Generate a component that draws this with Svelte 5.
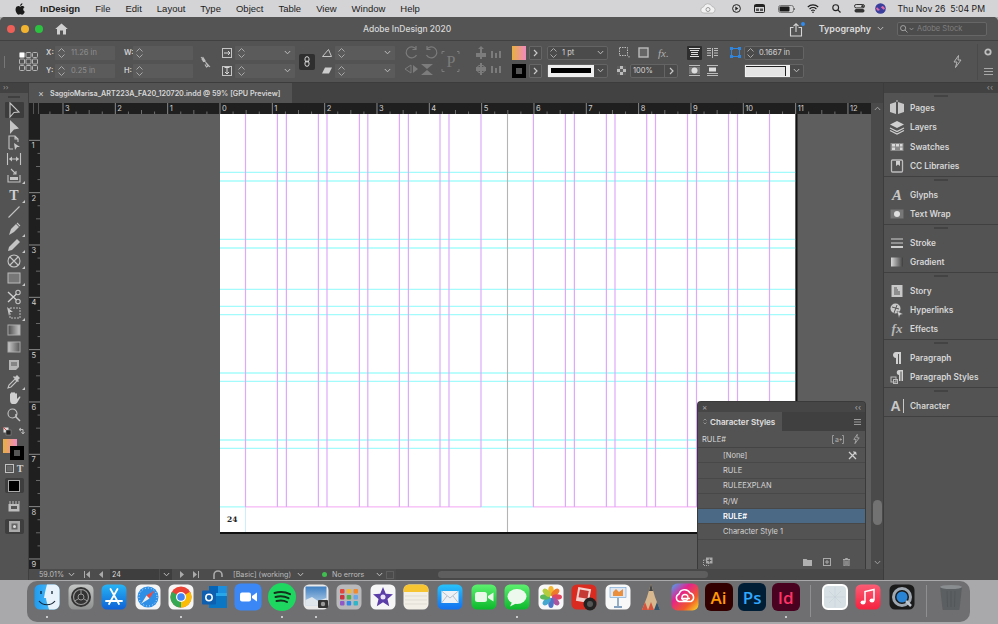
<script>
  const menus = ['File','Edit','Layout','Type','Object','Table','View','Window','Help'];
  const s = 'fill="none" stroke="#c4c4c4" stroke-width="1.1"';
  const f = 'fill="#c4c4c4"';
  const tools = [
    {cy:110,sel:1,i:`<path d="M-4-7 5 2 0 2.5-4 7Z" ${s}/>`},
    {cy:127,i:`<path d="M-4-7 5 1.5 0 2.5-4 7Z" ${f}/>`},
    {cy:143,i:`<path d="M-5 6V-7H1L4-4V-1M1-7V-4H4M-5 6H-1" ${s}/><path d="M0 0 6 4H3L1 7Z" ${f}/>`},
    {cy:159,i:`<path d="M-6.500-6V6M6.500-6V6M-4.500 0H4.500" ${s}/><path d="M-5 0-2-2.500V2.500ZM5 0 2-2.500V2.500Z" ${f}/>`},
    {cy:176,tri:1,i:`<path d="M-6-1V6H6V-1" ${s}/><path d="M-4 1H4V4H-4Z" ${f}/><path d="M-3-7 2-2M-1-2H2V-5" ${s}/>`},
    {cy:195,tri:1,i:`<text x="0" y="5" text-anchor="middle" font-family="Liberation Serif" font-weight="700" font-size="14" fill="#cfcfcf">T</text>`},
    {cy:212,i:`<path d="M-5.500 5.500 5.500-5.500" ${s}/>`},
    {cy:229,tri:1,i:`<path d="M-5 6-3 0 2-5 5-2 0 3Z" ${f}/><path d="M3-6 6-3" ${s}/>`},
    {cy:245,tri:1,i:`<path d="M-6 6-5 2 3-6 6-3-2 5Z" ${f}/>`},
    {cy:261,tri:1,i:`<circle r="6" ${s}/><path d="M-4-4 4 4M4-4-4 4" ${s}/>`},
    {cy:278,tri:1,i:`<rect x="-6" y="-5" width="12" height="10" fill="#777" stroke="#bbb"/>`},
    {cy:297,i:`<circle cx="4" cy="-4.500" r="2.200" ${s}/><circle cx="4" cy="4.500" r="2.200" ${s}/><path d="M-6-5 2.500 3M-6 5 2.500-3" stroke="#d0d0d0" stroke-width="1.300"/>`},
    {cy:313,tri:1,i:`<rect x="-4" y="-5" width="10" height="10" fill="none" stroke="#bbb" stroke-dasharray="2 1"/><path d="M-7-6-1-1-4-1-5 3Z" ${f}/>`},
    {cy:330,i:`<rect x="-6" y="-5" width="12" height="10" fill="url(#g1)" stroke="#aaa"/>`},
    {cy:347,i:`<rect x="-6" y="-5" width="12" height="10" fill="url(#g2)" stroke="#aaa"/>`},
    {cy:365,i:`<path d="M-5-5H5V2L2 5H-5Z" fill="#b5b5b5"/><path d="M-3-2H3M-3 0H3" stroke="#555"/>`},
    {cy:382,tri:1,i:`<path d="M-6 6-5 3 1-3 3-1-3 5Z" ${s}/><path d="M1-5 3-7 6-4 4-2 5-1 4 0-1-5 0-6Z" ${f}/>`},
    {cy:398,i:`<path d="M-4 1V-4C-4-5-3-5-3-4V-1-5C-3-6-1-6-1-5V-1-5C-1-6 1-6 1-5V-1-4C1-5 3-5 3-4V1L5-1C6-2 7-1 6 0L3 5C2 6 1 6-1 6-3 6-4 5-4 1Z" fill="#cfcfcf"/>`},
    {cy:415,i:`<circle cx="-1.500" cy="-1.500" r="4.500" ${s}/><path d="M2-1 2 2 6 6" stroke="#c4c4c4" stroke-width="1.500" fill="none"/>`}
  ].map((t, i, a) => ({...t, gap: a[i + 1] ? a[i + 1].cy - t.cy - 16 : 0}));
  const ruleX = [];
  for (let n = -4; n <= 12; n++) ruleX.push(n);
  const ruleY = [1,2,3,4,5,6,7,8,9];
  const Z = 220, U = 52.33, Y0 = 88;
  const hTicks = [];
  for (let n = -4; n <= 12; n++) for (const k of [1,2,3]) {
    const x = Z + (n + k / 4) * U;
    if (x > 40 && x < 871) hTicks.push({x, mid: k === 2});
  }
  const pages = [245.5,277.4,286.4,318.4,327,359.4,367.8,399.4,408.4,440,449,481,533.4,565.4,574.4,606.4,615,646.7,655.5,687.5,696.5,728.5,737.5,769.5];
  const cyan = [172.4,181,239.4,248,289.4,306.4,314.7,373,381.4,440,448.4];
  const dockPanels = [
    {first:1,items:[
      ['Pages',`<path d="M-7-4 -1-6V6L-7 4ZM7-4 1-6V6L7 4Z" fill="#c8c8c8"/><path d="M0-8V-6" stroke="#c8c8c8"/>`],
      ['Layers',`<path d="M0-6 7-2.500 0 1-7-2.500Z" fill="#d0d0d0"/><path d="M-7 1 0 4.500 7 1M-7 3.500 0 7 7 3.500" fill="none" stroke="#d0d0d0" stroke-width="1.200"/>`],
      ['Swatches',`<rect x="-6.500" y="-4" width="13" height="8" fill="#8a8a8a"/><path d="M-5-3H-2V-.5H-5ZM-1-3H2V-.5H-1ZM3-3H5.500V-.5H3ZM-5 .5H-2V3H-5ZM3 .5H5.500V3H3Z" fill="#d8d8d8"/>`],
      ['CC Libraries',`<rect x="-5.500" y="-6" width="11" height="12" rx="1" fill="none" stroke="#bdbdbd" stroke-width="1.300"/><path d="M-1-5H3V0L1-1.500-1 0Z" fill="#d0d0d0"/>`]]},
    {items:[
      ['Glyphs',`<text x="0" y="5" text-anchor="middle" font-family="Liberation Serif" font-style="italic" font-size="15" fill="#c8c8c8">A</text>`],
      ['Text Wrap',`<rect x="-6.500" y="-4.500" width="13" height="9" fill="#777"/><circle r="3" fill="#e0e0e0"/>`]]},
    {items:[
      ['Stroke',`<path d="M-6-4H6M-6 0H6" stroke="#cfcfcf" stroke-width="1.200"/><path d="M-6 4H6" stroke="#cfcfcf" stroke-width="2"/>`],
      ['Gradient',`<rect x="-6" y="-4.500" width="12" height="9" fill="url(#g3)"/>`]]},
    {items:[
      ['Story',`<rect x="-5.500" y="-6" width="11" height="12" fill="#c8c8c8"/><path d="M-3-3H0M-3-1H1M-3 1H3M-3 3H3" stroke="#555"/>`],
      ['Hyperlinks',`<circle cx="-1.500" cy="-1.500" r="5" fill="#c8c8c8"/><path d="M-5-3 2-1M-3 3 0-5" stroke="#555"/><path d="M0 1 6 4 3 5 2 8Z" fill="#d8d8d8" stroke="#555" stroke-width=".5"/>`],
      ['Effects',`<text x="0" y="4" text-anchor="middle" font-family="Liberation Serif" font-style="italic" font-size="13" fill="#b8b8b8">fx</text>`]]},
    {items:[
      ['Paragraph',`<path d="M-3-6H4V6H2V-4H1V6H-1V0C-5 0-5-6-1-6Z" fill="#d0d0d0"/>`],
      ['Paragraph Styles',`<path d="M0-7H6V4H4.500V-5.500H3.500V4H2V-2C-1-2-1-7 2-7Z" fill="#d0d0d0"/><rect x="-6" y="0" width="5" height="5" fill="none" stroke="#bbb"/><rect x="-3.500" y="2.500" width="4" height="4" fill="none" stroke="#bbb"/>`]]},
    {items:[
      ['Character',`<text x="-1.500" y="5" text-anchor="middle" font-family="Liberation Sans" font-size="14" fill="#c8c8c8">A</text><path d="M6.500-7V7" stroke="#c8c8c8"/>`]]}
  ];
  const styles = ['[None]','RULE','RULEEXPLAN','R/W','RULE#','Character Style 1'];
  const ic = (bg, inner, r = 5.5) => `<rect x="1.500" y="1.500" width="25" height="25" rx="${r}" fill="${bg}"/>${inner}`;
  const apps = [
    {run:1,h:ic('url(#d1)',`<path d="M14 1.500H20.500A5.500 5.500 0 0 1 26.500 7V21A5.500 5.500 0 0 1 20.500 26.500H16C14 20 13 17 13 15H11C12 9 13 5 14 1.500Z" fill="#e8f2fb"/><path d="M8 8V11M19 8V11" stroke="#123" stroke-width="1.300"/><path d="M6 18C10 23 18 23 22 18" fill="none" stroke="#123" stroke-width="1.200"/>`)},
    {h:ic('url(#d2)',`<circle cx="14" cy="14" r="10" fill="#333"/><circle cx="14" cy="14" r="7.500" fill="none" stroke="#999" stroke-width="1.200"/><path d="M14 6.500V11M7.500 18 11 16M20.500 18 17 16M11 14A3 3 0 0 1 17 14 3 3 0 0 1 11 14" fill="none" stroke="#999"/>`)},
    {h:ic('url(#d3)',`<path d="M10.500 6 19 21M17.500 6 9 21M6 18H22" stroke="#fff" stroke-width="1.800" stroke-linecap="round"/>`)},
    {h:ic('#f4f4f4',`<circle cx="14" cy="14" r="10.500" fill="#2f8fe6"/><circle cx="14" cy="14" r="9" fill="none" stroke="#cfe6fa" stroke-dasharray="1 2"/><path d="M20.500 7.500 15.500 15.500 12.500 12.500Z" fill="#ee4b3f"/><path d="M7.500 20.500 12.500 12.500 15.500 15.500Z" fill="#eee"/>`)},
    {run:1,h:ic('#f5f5f5',`<circle cx="14" cy="14" r="10.500" fill="#ea4335"/><path d="M14 14 23.100 8.700A10.500 10.500 0 0 1 14 24.500Z" fill="#fbbc05"/><path d="M14 14 14 24.500A10.500 10.500 0 0 1 4.900 8.700Z" fill="#34a853"/><circle cx="14" cy="14" r="5" fill="#fff"/><circle cx="14" cy="14" r="3.800" fill="#4285f4"/>`)},
    {h:`<path d="M8 3H26V24H8Z" fill="#28a8ea"/><path d="M8 3H17V10H8Z" fill="#0364b8"/><path d="M17 3H26V10H17Z" fill="#1a8fe0"/><path d="M8 13 26 13V25H8Z" fill="#0a76c4"/><rect x="1" y="7.500" width="14" height="14" rx="1" fill="#0f5fb0"/><circle cx="8" cy="14.500" r="3.200" fill="none" stroke="#fff" stroke-width="1.500"/>`},
    {h:`<rect x="0.500" y="0.500" width="27" height="27" rx="6" fill="#3b87f5"/><rect x="6" y="9.500" width="11" height="9" rx="2" fill="#fff"/><path d="M18 13 23 9.500V18.500L18 15Z" fill="#fff"/>`},
    {run:1,h:`<circle cx="14" cy="14" r="14" fill="#1ed760"/><path d="M6.500 10C11 8.500 17.500 8.800 22 11.200M7.500 14C11.500 13 16.500 13.200 20.500 15.200M8.500 18C12 17.200 16 17.300 19 19" fill="none" stroke="#12301c" stroke-width="2" stroke-linecap="round"/>`},
    {run:1,h:ic('#eaeaea',`<rect x="3.500" y="3.500" width="21" height="19" fill="url(#d4)"/><path d="M3.500 17 10 14 16 18 24.500 15V22.500H3.500Z" fill="#dfe6ec"/><rect x="16" y="17" width="10" height="8" rx="1" fill="#333"/><circle cx="21" cy="21" r="2.200" fill="#999"/>`)},
    {h:ic('#b9b9bb',`<g><rect x="5" y="6" width="4.500" height="4.500" rx="1" fill="#e2453c"/><rect x="11.700" y="6" width="4.500" height="4.500" rx="1" fill="#f3b730"/><rect x="18.500" y="6" width="4.500" height="4.500" rx="1" fill="#f08a2d"/><rect x="5" y="12" width="4.500" height="4.500" rx="1" fill="#c9343e"/><rect x="11.700" y="12" width="4.500" height="4.500" rx="1" fill="#4cb050"/><rect x="18.500" y="12" width="4.500" height="4.500" rx="1" fill="#6aa7e6"/><rect x="5" y="18" width="4.500" height="4.500" rx="1" fill="#8f58c7"/><rect x="11.700" y="18" width="4.500" height="4.500" rx="1" fill="#2f87e8"/><rect x="18.500" y="18" width="4.500" height="4.500" rx="1" fill="#30b5c8"/></g>`)},
    {h:ic('#f6f6f6',`<path d="M14 4 16.800 10.800 24 11.300 18.500 16 20.200 23.200 14 19.300 7.800 23.200 9.500 16 4 11.300 11.200 10.800Z" fill="#5b3ea8"/><circle cx="14" cy="14" r="2.500" fill="#e9e2f7"/>`)},
    {h:ic('#f1efe6',`<path d="M1.500 9V7A5.500 5.500 0 0 1 7 1.500H21A5.500 5.500 0 0 1 26.500 7V9Z" fill="#f7c531"/><path d="M3 13H25M3 17H25M3 21H25" stroke="#d8d6cc" stroke-width=".7"/>`)},
    {h:ic('url(#d5)',`<rect x="5.500" y="8" width="17" height="12" fill="#eef2f6"/><path d="M5.500 8 14 15 22.500 8M5.500 20 11 13M22.500 20 17 13" fill="none" stroke="#a8b2bd" stroke-width=".8"/>`)},
    {h:ic('url(#d6)',`<rect x="5" y="9" width="12" height="10" rx="2.500" fill="#e8f7e8"/><path d="M18 13 23.500 9.500V18.500L18 15Z" fill="#e8f7e8"/>`)},
    {run:1,h:ic('url(#d6)',`<ellipse cx="14" cy="13.500" rx="9.500" ry="7.500" fill="#eef9ee"/><path d="M9 19 7 23.500 13 20.500Z" fill="#eef9ee"/>`)},
    {h:ic('#f7f7f7',`<g transform="translate(14 14)"><ellipse cy="-6" rx="2.800" ry="5" fill="#f5b52c"/><ellipse cy="-6" rx="2.800" ry="5" fill="#ef7a2a" transform="rotate(45)"/><ellipse cy="-6" rx="2.800" ry="5" fill="#e2455f" transform="rotate(90)"/><ellipse cy="-6" rx="2.800" ry="5" fill="#a9559f" transform="rotate(135)"/><ellipse cy="-6" rx="2.800" ry="5" fill="#4e74c7" transform="rotate(180)"/><ellipse cy="-6" rx="2.800" ry="5" fill="#45a8cf" transform="rotate(225)"/><ellipse cy="-6" rx="2.800" ry="5" fill="#5cb85a" transform="rotate(270)"/><ellipse cy="-6" rx="2.800" ry="5" fill="#b4cc3d" transform="rotate(315)"/></g>`)},
    {h:ic('#d92b20',`<rect x="7" y="5" width="13" height="14" fill="#f6d2cf" transform="rotate(10 13 12)"/><rect x="9" y="7" width="9" height="8" fill="#c63a35" transform="rotate(10 13 12)"/><circle cx="20" cy="21" r="6.500" fill="#222"/><circle cx="20" cy="21" r="3" fill="#555"/>`)},
    {h:ic('#f8f8f8',`<rect x="6" y="4.500" width="16" height="10" fill="#dfe8f2" stroke="#6b9fd3" stroke-width=".6"/><path d="M9 9 12 6 15 9 19 6V13H9Z" fill="#e98f3e"/><path d="M14 15V23M10 24H18" stroke="#5f86ad" stroke-width="1.300"/>`)},
    {h:`<path d="M14 .5 18 14 23 27H5L10 14Z" fill="#d7b88f"/><path d="M14 .5 16 8H12Z" fill="#444"/><path d="M5 27 8 19 11 27ZM11 27 14 19 17 27Z" fill="#d5533d"/><path d="M17 27 20 19 23 27Z" fill="#33536c"/>`},
    {h:`<rect x="0.500" y="0.500" width="27" height="27" rx="6" fill="url(#d7)"/><path d="M8 18.500A4 4 0 0 1 8 11 6 6 0 0 1 19 10 4.500 4.500 0 0 1 20 18.500ZM10 15.500H19" fill="none" stroke="#fff" stroke-width="1.500"/><circle cx="14" cy="14.500" r="3" fill="none" stroke="#fff" stroke-width="1.300"/>`},
    {a:'Ai',bg:'#330000',fg:'#ff9a00'},
    {a:'Ps',bg:'#001e36',fg:'#31a8ff'},
    {a:'Id',bg:'#49021f',fg:'#ff3366',run:1,gapAfter:1},
    {h:`<rect x="2" y="2" width="24" height="24" rx="5" fill="#d7e0e4" stroke="#fff" stroke-width="2"/><path d="M8 8 20 20M20 8 8 20M14 4V24M4 14H24" stroke="#c6d2d8" stroke-width=".6"/>`},
    {h:ic('url(#d8)',`<path d="M11 19V8.500L20 6.500V17" fill="none" stroke="#fff" stroke-width="1.500"/><ellipse cx="9" cy="19.500" rx="2.500" ry="2" fill="#fff"/><ellipse cx="18" cy="17.500" rx="2.500" ry="2" fill="#fff"/>`)},
    {h:ic('#1a1a1a',`<circle cx="14" cy="14" r="8.500" fill="none" stroke="#9fa7b0" stroke-width="3"/><circle cx="14" cy="14" r="5.500" fill="#2a84d6"/><path d="M18 18 23 23" stroke="#bfc5cc" stroke-width="2.500"/>`),gapAfter:1},
    {h:`<path d="M3 4H25L22.500 26.500A1.500 1.500 0 0 1 21 27H7A1.500 1.500 0 0 1 5.500 26.500Z" fill="#5c5f61"/><ellipse cx="14" cy="4" rx="11" ry="2" fill="#8a8d8f"/><path d="M10 8 10.500 24M14 8V24M18 8 17.500 24" stroke="#4e5153" stroke-width=".6"/>`}
  ];
</script>

{#snippet chev(w = 7)}
  <svg class="chev" width={w} height="5" viewBox="0 0 7 5"><path d="M.8 1 3.500 3.800 6.200 1" fill="none" stroke="#bdbdbd" stroke-width="1"/></svg>
{/snippet}
{#snippet spin()}
  <svg class="spin" width="11" height="12" viewBox="0 0 11 12"><path d="M2.500 4.500 5.500 1.500 8.500 4.500M2.500 7.500 5.500 10.500 8.500 7.500" fill="none" stroke="#a8a8a8"/></svg>
{/snippet}
{#snippet arrowBtn()}
  <span class="arrowbtn"><svg width="5" height="8" viewBox="0 0 5 8"><path d="M1 1 4 4 1 7" fill="none" stroke="#c8c8c8" stroke-width="1.200"/></svg></span>
{/snippet}
{#snippet field(w, text, down)}
  <span class="field" style="width:{w}px">
    {@render spin()}
    <span class="dim">{text}</span>
    {#if down}{@render chev()}{/if}
  </span>
{/snippet}

<svg class="defs" width="0" height="0" aria-hidden="true">
  <defs>
    <linearGradient id="g1"><stop offset="0" stop-color="#4a4a4a"/><stop offset="1" stop-color="#c8c8c8"/></linearGradient>
    <linearGradient id="g2"><stop offset="0" stop-color="#c8c8c8"/><stop offset="1" stop-color="#555"/></linearGradient>
    <linearGradient id="g3"><stop offset="0" stop-color="#d8d8d8"/><stop offset="1" stop-color="#3f3f3f"/></linearGradient>
    <linearGradient id="sw" x2="1" y2="0"><stop offset="0" stop-color="#e8b03f"/><stop offset="1" stop-color="#f089c0"/></linearGradient>
    <linearGradient id="d1" x2="1"><stop offset="0" stop-color="#1f9bf0"/><stop offset="1" stop-color="#5ac8fa"/></linearGradient>
    <linearGradient id="d2" x2="0" y2="1"><stop offset="0" stop-color="#c4c6c6"/><stop offset="1" stop-color="#8f9190"/></linearGradient>
    <linearGradient id="d3" x2="0" y2="1"><stop offset="0" stop-color="#27b4f5"/><stop offset="1" stop-color="#0f62d6"/></linearGradient>
    <linearGradient id="d4" x2="0" y2="1"><stop offset="0" stop-color="#3e7fc2"/><stop offset="1" stop-color="#bcd4ea"/></linearGradient>
    <linearGradient id="d5" x2="0" y2="1"><stop offset="0" stop-color="#28c2fb"/><stop offset="1" stop-color="#1470ee"/></linearGradient>
    <linearGradient id="d6" x2="0" y2="1"><stop offset="0" stop-color="#5cf16f"/><stop offset="1" stop-color="#0cb82c"/></linearGradient>
    <linearGradient id="d7" x1="0" y1="0" x2="1" y2="1"><stop offset="0" stop-color="#3fa9f5"/><stop offset=".35" stop-color="#e3238e"/><stop offset=".7" stop-color="#f1592a"/><stop offset="1" stop-color="#f9e125"/></linearGradient>
    <linearGradient id="d8" x2="0" y2="1"><stop offset="0" stop-color="#fb5c74"/><stop offset="1" stop-color="#f5223f"/></linearGradient>
  </defs>
</svg>

<div class="screen">
  <header class="menubar">
    <svg class="apple" width="10" height="12" viewBox="0 0 17 20"><path fill="#1a1a1a" d="M14 10.600c0-2.400 2-3.500 2.100-3.600-1.100-1.700-2.900-1.900-3.500-1.900-1.500-.2-2.900.9-3.700.9s-1.900-.9-3.200-.9C4 5.200 2.500 6.100 1.700 7.500 0 10.500 1.300 14.900 3 17.300c.8 1.200 1.800 2.500 3 2.500 1.200-.1 1.700-.8 3.100-.8s1.900.8 3.200.8 2.200-1.200 3-2.400c.9-1.400 1.300-2.700 1.300-2.800-.1 0-2.600-1-2.600-4zM11.600 3.400c.7-.8 1.100-1.900 1-3.100-1 0-2.200.7-2.900 1.500-.6.700-1.200 1.900-1 3 1.100.1 2.200-.6 2.900-1.400z"/></svg>
    <b class="app">InDesign</b>
    {#each menus as m}<span>{m}</span>{/each}
    <span class="mb-right">
      <svg width="16" height="11" viewBox="0 0 16 11"><path d="M4 10A3 3 0 0 1 3.500 4 4.500 4.500 0 0 1 12 3.500 3.300 3.300 0 0 1 12.500 10Z" fill="#f2f2f2" stroke="#aaa" stroke-width=".7"/><circle cx="8" cy="6.500" r="2" fill="none" stroke="#999"/></svg>
      <svg class="m1" width="9" height="9" viewBox="0 0 9 9"><circle cx="4.500" cy="4.500" r="3.900" fill="none" stroke="#222"/><path d="M3.300 2.600 6.300 4.500 3.300 6.400Z" fill="#222"/></svg>
      <svg class="m2" width="11" height="9" viewBox="0 0 11 9"><rect x=".5" y=".5" width="10" height="8" rx="1" fill="none" stroke="#222"/><path d="M.5 1H10.500V3H.5Z" fill="#222"/><path d="M2 4.500H5V7H2ZM6 4.500H9V7H6Z" fill="#555"/></svg>
      <svg class="m3" width="18" height="8" viewBox="0 0 18 8"><rect x=".5" y=".5" width="15" height="7" rx="2" fill="none" stroke="#777"/><rect x="1.500" y="1.500" width="10" height="5" rx="1" fill="#1c1c1c"/><path d="M16.500 3V5" stroke="#777"/></svg>
      <svg class="m4" width="12" height="9" viewBox="0 0 12 9"><path d="M.8 3A7.500 7.500 0 0 1 11.200 3M2.600 5A5 5 0 0 1 9.400 5M4.300 6.800A2.500 2.500 0 0 1 7.700 6.800" fill="none" stroke="#1c1c1c" stroke-width="1.100"/><circle cx="6" cy="8.200" r=".8" fill="#1c1c1c"/></svg>
      <svg class="m5" width="9" height="9" viewBox="0 0 9 9"><circle cx="3.700" cy="3.700" r="2.900" fill="none" stroke="#222" stroke-width="1.100"/><path d="M5.800 5.800 8.500 8.500" stroke="#222" stroke-width="1.200"/></svg>
      <svg class="m6" width="11" height="9" viewBox="0 0 11 9"><rect x=".5" y=".5" width="10" height="3.400" rx="1.700" fill="none" stroke="#333"/><rect x=".5" y="5" width="10" height="3.400" rx="1.700" fill="#333"/><circle cx="8.500" cy="2.200" r="1.200" fill="#333"/></svg>
      <svg class="m7" width="11" height="11" viewBox="0 0 11 11"><circle cx="5.500" cy="5.500" r="5.300" fill="#3a3f9e"/><path d="M1 5.500C3 2 4 9 5.500 5.500S8 2 10 5.500C8 9 7 3 5.500 5.500S3 9 1 5.500Z" fill="#e26aa8"/></svg>
      <span class="clock">Thu Nov 26&nbsp; 5:04 PM</span>
    </span>
  </header>

  <main class="window">
    <div class="titlebar">
      <i class="light r"></i><i class="light y"></i><i class="light g"></i>
      <svg class="home" width="13" height="12" viewBox="0 0 13 12"><path d="M6.500.5 12.800 6H11V11.500H8V7.500H5V11.500H2V6H.2Z" fill="#cfcfcf"/></svg>
      <span class="title">Adobe InDesign 2020</span>
      <svg class="share" width="14" height="14" viewBox="0 0 14 14"><path d="M4.500 4.500H1.500V13H12.500V4.500H9.500M7 9V1M4.500 3.200 7 .8 9.500 3.200" fill="none" stroke="#d5d5d5" stroke-width="1.100"/></svg>
      <i class="bluedot"></i>
      <b class="workspace">Typography</b>
      {@render chev()}
      <span class="stock">
        <svg width="8" height="8" viewBox="0 0 9 9"><circle cx="3.500" cy="3.500" r="2.900" fill="none" stroke="#aaa"/><path d="M5.600 5.600 8.400 8.400" stroke="#aaa"/></svg>
        <svg width="5" height="4" viewBox="0 0 7 5"><path d="M.8 1 3.500 3.800 6.200 1" fill="none" stroke="#aaa"/></svg>
        <span>Adobe Stock</span>
      </span>
    </div>

    <div class="control">
      <i class="grip"></i>
      <svg class="refgrid" width="19" height="19" viewBox="0 0 19 19">
        {#each [0,1,2] as r}{#each [0,1,2] as c}
          <rect x={c*6.5+.5} y={r*6.5+.5} width="5" height="5" rx="1" fill={r===0&&c===0?'#fff':'none'} stroke="#b5b5b5"/>
        {/each}{/each}
      </svg>
      <div class="cg xy">
        <div class="r2"><b>X:</b>{@render field(60,'11.26 in')}</div>
        <div class="r2"><b>Y:</b>{@render field(60,'0.25 in')}</div>
      </div>
      <div class="cg wh">
        <div class="r2"><b>W:</b>{@render field(60,'')}</div>
        <div class="r2"><b>H:</b>{@render field(60,'')}</div>
      </div>
      <svg class="unlink" width="11" height="12" viewBox="0 0 11 12"><path d="M3 1.500 5 4.500 3.500 5.500 2 3ZM6 7 8 10 6.500 11 5 8.500M1 1 10 11" fill="none" stroke="#bbb" stroke-width="1.100"/></svg>
      <div class="cg scale">
        <div class="r2"><svg width="10" height="10" viewBox="0 0 10 10"><rect x=".5" y=".5" width="9" height="9" fill="none" stroke="#c4c4c4"/><path d="M2 5H8M6 3 8 5 6 7" fill="none" stroke="#d8d8d8"/></svg>{@render field(60,'',true)}</div>
        <div class="r2"><svg width="10" height="10" viewBox="0 0 10 10"><rect x=".5" y=".5" width="9" height="9" fill="none" stroke="#c4c4c4"/><path d="M5 2V8M3 6 5 8 7 6M2.500 1.500H7.500" fill="none" stroke="#d8d8d8"/></svg>{@render field(60,'',true)}</div>
      </div>
      <span class="linkbtn"><svg width="6" height="11" viewBox="0 0 6 11"><rect x="1" y=".7" width="4" height="5.300" rx="2" fill="none" stroke="#ddd"/><rect x="1" y="5" width="4" height="5.300" rx="2" fill="none" stroke="#ddd"/></svg></span>
      <div class="cg angle">
        <div class="r2"><svg width="10" height="8" viewBox="0 0 10 8"><path d="M.5 7.500H9.500L6.500 .5Z" fill="none" stroke="#c4c4c4"/></svg>{@render field(60,'',true)}</div>
        <div class="r2"><svg width="10" height="7" viewBox="0 0 10 7"><path d="M0 6.500 3 .5H10L7 6.500Z" fill="#cdcdcd"/></svg>{@render field(60,'',true)}</div>
      </div>
      <svg class="rot" width="58" height="34" viewBox="0 0 58 34">
        <g fill="none" stroke="#7c7c7c" stroke-width="1.200">
          <path d="M12 4A5.500 5.500 0 1 0 12.500 10M12 1V4.500H8.500"/>
          <path d="M23 4A5.500 5.500 0 1 1 22.500 10M23 1V4.500H26.500"/>
        </g>
        <g fill="#7c7c7c">
          <path d="M7 20V28L1 24Z" fill="none" stroke="#7c7c7c"/><path d="M9 20V28L14 24Z"/><path d="M17 19H29L23 24ZM17 30H29L23 25Z"/>
        </g>
        <text x="47" y="22" text-anchor="middle" font-family="Liberation Serif" font-size="16" fill="#7c7c7c">P</text>
        <path d="M38 9V6.500H40.500M55 9V6.500H53M38 24V26.500H40.500M55 24V26.500H53" fill="none" stroke="#7c7c7c"/>
      </svg>
      <svg class="aligns" width="27" height="34" viewBox="0 0 27 34">
        <g fill="#7c7c7c">
          <path d="M6 1 9 4H3ZM1 8H11V12H1ZM5 4H7V14H5Z"/><path d="M1 22H11V26H1ZM5 18H7V30H5Z"/><circle cx="6" cy="24" r="4" fill="none" stroke="#7c7c7c"/>
          <path d="M16 6H18V13H16ZM20 8H22V13H20ZM24 6H26V13H24Z"/>
          <path d="M16 21H18V28H16ZM20 23H22V28H20ZM24 21H26V28H24Z"/>
        </g>
      </svg>
      <div class="cg colors">
        <div class="r2"><svg width="14" height="14"><rect width="14" height="14" fill="url(#sw)"/></svg>{@render arrowBtn()}</div>
        <div class="r2"><svg width="14" height="14"><rect width="14" height="14" fill="#000"/><rect x="4" y="4" width="6" height="6" fill="#555"/></svg>{@render arrowBtn()}</div>
      </div>
      <div class="cg strokes">
        <div class="box w61">{@render spin()}<span class="val">1 pt</span>{@render chev()}</div>
        <div class="box w61 pad0"><span class="white"><i class="blk"></i></span>{@render chev()}</div>
      </div>
      <div class="cg fxs">
        <div class="r2 fxrow">
          <svg width="11" height="11" viewBox="0 0 11 11"><rect x=".5" y=".5" width="8" height="8" fill="none" stroke="#bbb" stroke-dasharray="1.500 1"/><path d="M10 9V10.500" stroke="#bbb"/></svg>
          <svg width="11" height="11" viewBox="0 0 11 11"><rect x="1" y="1" width="9" height="9" fill="#666" stroke="#bbb" stroke-width="1.400"/></svg>
          <span class="fx">fx.</span>
        </div>
        <div class="r2 oprow">
          <svg width="9" height="9" viewBox="0 0 9 9"><rect width="9" height="9" fill="#bbb"/><path d="M0 0H3V3H0ZM6 0H9V3H6ZM3 3H6V6H3ZM0 6H3V9H0ZM6 6H9V9H6Z" fill="#5d5d5d"/></svg>
          <span class="box opv"><span class="val">100%</span><span class="arrowin"><svg width="5" height="8" viewBox="0 0 5 8"><path d="M1 1 4 4 1 7" fill="none" stroke="#c8c8c8" stroke-width="1.200"/></svg></span></span>
        </div>
      </div>
      <div class="cg wraps">
        <div class="r2"><span class="wrapbtn on"><svg width="11" height="10" viewBox="0 0 11 10"><path d="M0 .5H11M1 2.500H10M2 4.500H9M2 6.500H9M1 8.500H10" stroke="#ddd"/></svg></span><span class="wrapbtn"><svg width="11" height="10" viewBox="0 0 11 10"><path d="M0 .5H4M0 2.500H4M0 5H4M0 7.500H4M7 .5H11M7 2.500H11M7 5H11M7 7.500H11M5.500 0V10" stroke="#bbb"/></svg></span></div>
        <div class="r2"><span class="wrapbtn"><svg width="11" height="11" viewBox="0 0 11 11"><rect y="2" width="11" height="7" fill="#777"/><circle cx="5.500" cy="5.500" r="3" fill="#ddd"/><path d="M0 .5H11M0 10.500H11" stroke="#bbb"/></svg></span><span class="wrapbtn"><svg width="11" height="11" viewBox="0 0 11 11"><path d="M0 .5H11M0 10.500H11" stroke="#bbb"/><rect x="2" y="2.500" width="7" height="4" fill="#ddd"/><path d="M0 8.500H11" stroke="#bbb"/></svg></span></div>
      </div>
      <div class="cg corners">
        <div class="r2">
          <svg width="11" height="11" viewBox="0 0 11 11"><rect x="1.500" y="1.500" width="8" height="8" fill="none" stroke="#2f86e0"/><path d="M0 0H3V3H0ZM8 0H11V3H8ZM0 8H3V11H0ZM8 8H11V11H8Z" fill="#2f86e0"/></svg>
          <span class="box w60">{@render spin()}<span class="val">0.1667 in</span></span>
        </div>
        <div class="r2 r-end"><span class="box w60 pad0"><span class="white cstyle"><i></i></span>{@render chev()}</span></div>
      </div>
      <svg class="bolt" width="9" height="13" viewBox="0 0 9 13"><path d="M5.500.5 1 7H4L2.500 12.500 8 5H5Z" fill="none" stroke="#b5b5b5"/></svg>
      <div class="cend">
        <svg width="8" height="8" viewBox="0 0 8 8"><circle cx="4" cy="4" r="2.700" fill="none" stroke="#c0c0c0" stroke-width="1.800"/></svg>
        <svg width="9" height="7" viewBox="0 0 9 7"><path d="M0 .5H9M0 3.500H9M0 6.500H9" stroke="#a8a8a8"/></svg>
      </div>
    </div>

    <div class="body">
      <aside class="tools">
        <div class="tools-top"><span class="dbl">››</span></div>
        <i class="tool-grip"></i>
        <div class="toolstack">
          {#each tools as t}
            <span class="tool" class:sel={t.sel} class:tri={t.tri} style="margin-bottom:{t.gap}px">
              <svg width="16" height="16" viewBox="-8 -8 16 16">{@html t.i}</svg>
            </span>
          {/each}
        </div>
        <div class="defaults">
          <svg width="12" height="9" viewBox="0 0 12 9"><rect x=".5" y=".5" width="5" height="5" fill="#ddd"/><path d="M.5.5 5.500 5.500" stroke="#e33"/><rect x="3" y="3" width="5" height="5" fill="#222" stroke="#999" stroke-width=".5"/></svg>
          <svg width="8" height="8" viewBox="0 0 8 8"><path d="M1 2.500H5V6.500M3 1 1 2.500 3 4M3.500 5 5 7 6.500 5" fill="none" stroke="#bbb"/></svg>
        </div>
        <div class="fillstroke"><i class="fillc"></i><i class="strokec"><i></i></i></div>
        <div class="fmt">
          <span class="fmtb"><i></i></span>
          <span class="fmtt">T</span>
        </div>
        <div class="boxed"><i></i></div>
        <div class="viewtool">
          <svg width="14" height="11" viewBox="0 0 14 11"><rect x="1.500" y="3" width="11" height="7.500" fill="#bdbdbd"/><path d="M3 0V3M6 0V3M9 0V3M12 0V3" stroke="#bdbdbd"/><rect x="4" y="5" width="6" height="3" fill="#555"/></svg>
        </div>
        <div class="boxed scr"><svg width="11" height="11" viewBox="0 0 11 11"><rect width="11" height="11" fill="#aaa"/><rect x="2.500" y="2.500" width="6" height="6" fill="#666"/><circle cx="5.500" cy="5.500" r="1.500" fill="#ddd"/></svg></div>
      </aside>

      <section class="center">
        <div class="tabbar">
          <div class="tab"><span class="x">×</span><b>SaggioMarisa_ART223A_FA20_120720.indd @ 59% [GPU Preview]</b></div>
        </div>
        <div class="rulerrow">
          <span class="rcorner"></span>
          <svg class="hruler" width="831" height="11" viewBox="40 0 831 11">
            {#each hTicks as t}
              <path d={`M${t.x} ${t.mid ? 7 : 8.500}V11`} stroke="#6f6f6f" stroke-width="1"/>
            {/each}
            {#each ruleX as n}
              {#if Z + n * U >= 40}
                <path d={`M${Z + n * U} 0V11`} stroke="#8a8a8a"/>
                <text x={Z + n * U + 2} y="8" class="rn">{Math.abs(n)}</text>
              {/if}
            {/each}
          </svg>
          <span class="upbtn"><svg width="7" height="5" viewBox="0 0 7 5"><path d="M.8 4 3.500 1.200 6.200 4" fill="none" stroke="#a0a0a0"/></svg></span>
        </div>
        <div class="midrow">
          <svg class="vruler" width="11" height="455" viewBox="0 114 11 455">
            {#each ruleY as n}
              <path d={`M0 ${Y0 + n * U}H11`} stroke="#8a8a8a"/>
              <text x="2.500" y={Y0 + n * U + 8} class="rn">{n}</text>
              {#each [1,2,3] as k}
                <path d={`M${k === 2 ? 7 : 8.500} ${Y0 + n * U + k * U / 4}H11`} stroke="#6a6a6a"/>
              {/each}
            {/each}
          </svg>
          <div class="canvas">
            <div class="page">
              <svg width="578" height="421" viewBox="220 114 578 421">
                <rect x="220" y="114" width="575.500" height="418" fill="#fff"/>
                <path d="M245.500 507V532" stroke="#cfeefc"/>
                {#each cyan as y}
                  <path d={`M220 ${y}H795.500`} stroke="#a4fbfb" stroke-width="1.300"/>
                {/each}
                <path d="M220 506.800H245M481 506.800H533M769.500 506.800H795.500" stroke="#a4fbfb" stroke-width="1.300"/>
                <path d="M245 506.800H481M533 506.800H769.500" stroke="#f6b8f6" stroke-width="1.300"/>
                {#each pages as x}
                  <path d={`M${x} 114V507`} stroke="#dca9fb" stroke-width="1.200"/>
                {/each}
                <path d="M507.500 114V532" stroke="#b4b4b4" stroke-width="1.100"/>
                <path d="M796.500 114V534M220 533H797" stroke="#111" stroke-width="2"/>
                <text x="227" y="521.500" class="folio">24</text>
              </svg>
            </div>
            <section class="panel">
              <div class="p-top"><span>×</span><span>‹‹</span></div>
              <div class="p-tabs">
                <div class="p-tab"><svg width="4" height="7" viewBox="0 0 4 7"><path d="M.5 2.500 2 1 3.500 2.500M.5 4.500 2 6 3.500 4.500" fill="none" stroke="#aaa" stroke-width=".7"/></svg><b>Character Styles</b></div>
                <svg class="p-menu" width="7" height="6" viewBox="0 0 7 6"><path d="M0 .5H7M0 3H7M0 5.500H7" stroke="#9a9a9a"/></svg>
              </div>
              <div class="p-cur">
                <span>RULE#</span>
                <span class="p-cur-ic">
                  <svg width="12" height="9" viewBox="0 0 12 9"><path d="M2 .5H.5V8.500H2M10 .5H11.500V8.500H10M7.500 4.500H10M8.700 3.300V5.700" fill="none" stroke="#aaa" stroke-width=".8"/><text x="5" y="7" text-anchor="middle" font-family="Inter" font-size="7" fill="#aaa">a</text></svg>
                  <svg width="7" height="10" viewBox="0 0 9 13"><path d="M5.500.5 1 7H4L2.500 12.500 8 5H5Z" fill="none" stroke="#b5b5b5"/></svg>
                </span>
              </div>
              <ul>
                {#each styles as st, i}
                  <li class:active={i === 4}>
                    {st}
                    {#if i === 0}<svg width="9" height="9" viewBox="0 0 9 9"><path d="M1 8 8 1M1 1 8 8" stroke="#cfcfcf" stroke-width="1.300"/><path d="M5.500.5 8.500 3.500" stroke="#cfcfcf" stroke-width="1.300"/></svg>{/if}
                  </li>
                {/each}
              </ul>
              <div class="p-foot">
                <svg width="10" height="9" viewBox="0 0 10 9"><rect x=".5" y="3" width="5" height="5.500" fill="none" stroke="#aaa" stroke-dasharray="1 1"/><rect x="3" y=".5" width="6.500" height="6" fill="#aaa"/><path d="M6.300 1.500V5.500M4.300 3.500H8.300" stroke="#555"/></svg>
                <span class="grow"></span>
                <svg width="9" height="7" viewBox="0 0 9 7"><path d="M0 0H3.500L4.500 1H9V7H0Z" fill="#b0b0b0"/></svg>
                <svg class="pf2" width="8" height="8" viewBox="0 0 8 8"><rect x=".5" y=".5" width="7" height="7" fill="none" stroke="#aaa"/><path d="M4 2V6M2 4H6" stroke="#aaa"/></svg>
                <svg class="pf3" width="7" height="8" viewBox="0 0 7 8"><path d="M0 1.500H7M2.500 1.500V.5H4.500V1.500M1 2V8H6V2" fill="none" stroke="#aaa"/><path d="M1.500 2.500H5.500V7.500H1.500Z" fill="#888"/></svg>
              </div>
              <div class="p-bottom"><i></i></div>
            </section>
          </div>
          <div class="vscroll">
            <i class="thumb"></i>
            <svg width="7" height="5" viewBox="0 0 7 5"><path d="M.8 1 3.500 3.800 6.200 1" fill="none" stroke="#a0a0a0"/></svg>
          </div>
        </div>
        <footer class="status">
          <span class="zoomv">59.01%</span>{@render chev()}
          <svg class="nav1" width="20" height="7" viewBox="0 0 20 7"><path d="M.5 0V7" stroke="#aaa"/><path d="M6 0V7L2 3.500ZM19 0V7L15 3.500Z" fill="#aaa"/></svg>
          <span class="pageno">24</span>
          <span class="pagebtn">{@render chev()}</span>
          <svg class="nav2" width="20" height="7" viewBox="0 0 20 7"><path d="M1 0V7L5 3.500ZM14 0V7L18 3.500Z" fill="#aaa"/><path d="M19.500 0V7" stroke="#aaa"/></svg>
          <svg class="arc" width="10" height="9" viewBox="0 0 10 9"><path d="M1 9V5A4 4 0 0 1 9 5V7" fill="none" stroke="#aaa" stroke-width="1.600"/></svg>
          <span class="basic">[Basic] (working)</span>
          {@render chev()}
          <i class="green"></i>
          <span class="noerr">No errors</span>
          {@render chev()}
          <i class="sqr"></i>
          <span class="track"><i></i></span>
        </footer>
      </section>

      <aside class="dock-panels">
        <div class="dp-top">‹‹</div>
        {#each dockPanels as g}
          <div class="dp-group" class:first={g.first}>
            <i></i>
            {#each g.items as it}
              <div class="dp-row"><svg width="16" height="16" viewBox="-8 -8 16 16">{@html it[1]}</svg><span>{it[0]}</span></div>
            {/each}
          </div>
        {/each}
      </aside>
    </div>
  </main>

  <nav class="dock">
    {#each apps as a}
      <div class="app-i">
        {#if a.a}
          <span class="adobe" style="background:{a.bg};color:{a.fg}">{a.a}</span>
        {:else}
          <svg width="28" height="28" viewBox="0 0 28 28">{@html a.h}</svg>
        {/if}
        <i class:on={a.run}></i>
      </div>
      {#if a.gapAfter}<span class="dock-sep"></span>{/if}
    {/each}
  </nav>
</div>

<style>
  :global(body){margin:0;background:#a9a9ab;font-family:"Inter","Liberation Sans",sans-serif;overflow:hidden}
  i{display:block}
  .defs{position:absolute}
  .screen{width:998px;height:624px;display:flex;flex-direction:column;overflow:hidden}
  .menubar{height:17px;flex:none;background:#d4d4d6;display:flex;align-items:center;font:9.500px "Liberation Sans",sans-serif;color:#1c1c1c;gap:15px;padding-left:15px;box-sizing:border-box}
  .app{font-weight:700}
  .mb-right{margin-left:auto;display:flex;align-items:center;padding-right:13px}
  .m1{margin-left:15.500px}.m2{margin-left:13px}.m3{margin-left:13.500px}.m4{margin-left:11px}.m5{margin-left:12.500px}.m6{margin-left:13px}.m7{margin-left:10px}
  .clock{margin-left:11.500px;font:8.700px "Inter",sans-serif;white-space:nowrap}
  .window{height:563px;flex:none;background:#535353;border-radius:5px 5px 0 0;display:flex;flex-direction:column;overflow:hidden;color:#d4d4d4}
  .titlebar{height:24px;flex:none;display:flex;align-items:center;position:relative;border-bottom:1px solid #414141;box-sizing:border-box;background:#545454}
  .light{width:8px;height:8px;border-radius:50%;margin-left:6px}
  .light:first-child{margin-left:6.500px}
  .r{background:#ee5f57}.y{background:#f2b32f}.g{background:#2bc240}
  .home{margin-left:12px}
  .title{position:absolute;left:363px;font-size:8.500px;font-weight:500;color:#d8d8d8;white-space:nowrap}
  .share{margin-left:auto;position:relative;top:1px}
  .bluedot{width:4px;height:4px;border-radius:50%;background:#2f8bf0;margin:-10px 0 0 -2px}
  .workspace{margin-left:14px;font-size:9px;font-weight:600;color:#dcdcdc;margin-right:6px}
  .stock{width:90px;height:14px;box-sizing:border-box;border:1px solid #666;border-radius:2px;margin:0 11px 0 13px;display:flex;align-items:center;gap:1px;padding-left:2px;font-size:7.500px;color:#808080;background:#4c4c4c}
  .stock span{margin-left:2px}
  .control{height:42px;flex:none;display:flex;align-items:center;background:#535353;box-sizing:border-box;border-bottom:1px solid #3c3c3c}
  .grip{width:1px;height:12px;background:#777;margin-left:4px}
  .refgrid{margin-left:14px}
  .cg{display:flex;flex-direction:column;gap:4px}
  .r2{display:flex;align-items:center;height:14px}
  .r2 b{width:9px;font-size:7.500px;color:#cfcfcf;font-weight:600}
  .xy{margin-left:8px}.wh{margin-left:9px}
  .unlink{margin-left:7px}
  .scale{margin-left:11px}
  .scale .r2,.angle .r2{gap:3px}
  .field{display:flex;align-items:center;height:14px;background:#5b5b5b;border-radius:1px;box-sizing:border-box;padding-left:1px}
  .spin{flex:none;margin-right:1px}
  .dim{font-size:7.500px;color:#8f8f8f;margin-left:3px;flex:1;white-space:nowrap}
  .field .chev{margin-right:4px;flex:none}
  .linkbtn{width:16px;height:16px;margin-left:4px;background:#2f2f2f;border-radius:2px;display:flex;align-items:center;justify-content:center}
  .angle{margin-left:7px}
  .rot{margin-left:9px}
  .aligns{margin-left:13px}
  .colors{margin-left:10px}
  .colors .r2{gap:3px}
  .arrowbtn{width:11px;height:12px;border:1px solid #666;background:#4c4c4c;display:flex;align-items:center;justify-content:center;border-radius:1px}
  .strokes{margin-left:5px}
  .box{display:flex;align-items:center;height:14px;background:#4b4b4b;border:1px solid #646464;box-sizing:border-box;border-radius:2px}
  .w61{width:61px}.w60{width:60px}
  .val{font-size:7.500px;color:#d6d6d6;margin-left:2px;flex:1;white-space:nowrap}
  .box .chev{margin:0 3px;flex:none}
  .pad0{padding:0}
  .white{flex:1;align-self:stretch;background:#efefef;display:flex;align-items:center;padding:0 3px}
  .blk{height:5px;background:#000;flex:1}
  .cstyle{padding:1px 4px 1px 1px}
  .cstyle i{flex:1;align-self:stretch;background:#e4e4e4;border-top:1px solid #222;border-right:1px solid #222}
  .fxs{margin-left:9px;width:62px}
  .fxrow{gap:8px;padding-left:2px}
  .fx{font-family:"Liberation Serif",serif;font-style:italic;font-size:11px;color:#b0b0b0;margin-left:1px}
  .oprow{gap:4px}
  .opv{width:48px}
  .arrowin{width:12px;display:flex;justify-content:center;border-left:1px solid #646464;height:100%;align-items:center}
  .wraps{margin-left:8px}
  .wraps .r2{gap:3px}
  .wrapbtn{width:15px;height:14px;display:flex;align-items:center;justify-content:center;border-radius:1px}
  .wrapbtn.on{background:#2e2e2e}
  .corners{margin-left:10px}
  .corners .r2{gap:3px}
  .r-end{justify-content:flex-end}
  .bolt{margin-left:auto;margin-right:15px}
  .cend{display:flex;flex-direction:column;gap:12px;align-items:center;width:20px;border-left:1px solid #4a4a4a;height:36px;justify-content:center}
  .body{flex:1;display:flex;min-height:0}
  .tools{width:28px;flex:none;background:#535353;border-right:1px solid #3f3f3f;display:flex;flex-direction:column;align-items:center}
  .tools-top{height:10px;width:100%;background:#424242;display:flex;align-items:center;padding-left:3px;box-sizing:border-box}
  .dbl{font-size:7px;color:#999;line-height:8px}
  .tool-grip{width:12px;height:2px;background:#3f3f3f;margin:3px 0 4px}
  .toolstack{display:flex;flex-direction:column;align-items:center;width:100%}
  .tool{width:19px;height:16px;display:flex;align-items:center;justify-content:center;position:relative;border-radius:1px;flex:none}
  .tool.sel{background:#3c3c3c}
  .tool.tri::after{content:"";position:absolute;right:-1px;bottom:0;border-left:3px solid transparent;border-bottom:3px solid #c8c8c8}
  .defaults{display:flex;align-items:center;justify-content:center;gap:3px;width:100%;margin-top:2px;height:12px}
  .fillstroke{position:relative;width:22px;height:22px;margin:2px 0 0 -1px}
  .fillc{position:absolute;left:0;top:0;width:14px;height:14px;background:linear-gradient(90deg,#e8b03f,#f089c0)}
  .strokec{position:absolute;left:7px;top:7px;width:14px;height:14px;background:#000;display:flex;align-items:center;justify-content:center}
  .strokec i{width:6px;height:6px;background:#555}
  .fmt{display:flex;gap:3px;align-items:center;margin-top:3px;height:9px}
  .fmtb{width:9px;height:9px;border:1px solid #c0c0c0;box-sizing:border-box;padding:1px}
  .fmtb i{width:100%;height:100%;background:#666}
  .fmtt{font:700 10px/9px "Liberation Serif",serif;color:#cfcfcf}
  .boxed{width:19px;height:15px;background:#3e3e3e;border-radius:2px;margin-top:5px;display:flex;align-items:center;justify-content:center}
  .boxed>i{width:10px;height:10px;background:#000;border:1px solid #aaa}
  .viewtool{margin-top:5.500px;height:15px;display:flex;align-items:center;justify-content:center;width:100%}
  .center{flex:1;min-width:0;display:flex;flex-direction:column;background:#424242}
  .tabbar{height:20px;flex:none;display:flex}
  .tab{width:263px;background:#535353;display:flex;align-items:center;font-size:7.200px;white-space:nowrap}
  .tab .x{margin-left:9px;width:12px;font-size:9px;color:#ccc}
  .tab b{font-weight:600;color:#d8d8d8}
  .rulerrow{height:11px;flex:none;display:flex;background:#1f1f1f}
  .rcorner{width:11px;flex:none;background:repeating-linear-gradient(90deg,#1f1f1f 0 4px,#555 4px 5px)}
  .rn{font-size:7.500px;fill:#d0d0d0;font-family:"Inter",sans-serif}
  .upbtn{width:12px;background:#4a4a4a;display:flex;justify-content:center;align-items:center;flex:none}
  .midrow{height:455px;flex:none;display:flex}
  .vruler{background:#1f1f1f;flex:none}
  .canvas{flex:1;position:relative;background:#5e5e5e;overflow:hidden}
  .page{position:absolute;left:180px;top:0;line-height:0}
  .folio{font:700 7.500px "DejaVu Serif",serif;fill:#222}
  .panel{position:absolute;left:658px;top:288px;width:167px;height:176px;background:#4e4e4e;border-radius:3px;display:flex;flex-direction:column;color:#d4d4d4;box-shadow:0 0 0 1px #3a3a3a}
  .p-top{height:10px;background:#464646;display:flex;justify-content:space-between;align-items:center;padding:0 4px;font-size:8px;color:#aaa;border-radius:3px 3px 0 0;flex:none;line-height:8px}
  .p-tabs{height:19px;background:#404040;display:flex;align-items:center;flex:none}
  .p-tab{width:84px;height:100%;background:#535353;display:flex;align-items:center;gap:3px;padding-left:5px;box-sizing:border-box;font-size:8.100px;white-space:nowrap}
  .p-tab b{font-weight:600;color:#e0e0e0}
  .p-menu{margin-left:auto;margin-right:4px}
  .p-cur{height:17px;flex:none;display:flex;align-items:center;justify-content:space-between;padding-left:4px;font-size:7.500px;color:#d8d8d8;background:#535353;border-bottom:1px solid #444;box-sizing:border-box}
  .p-cur-ic{display:flex;gap:9px;margin-right:5px;align-items:center}
  ul{list-style:none;margin:0;padding:0;flex:none;background:#535353}
  li{height:15.300px;box-sizing:border-box;padding-left:25px;font-size:7.500px;color:#d4d4d4;display:flex;align-items:center;justify-content:space-between;padding-right:8px;border-bottom:1px solid #484848}
  li.active{background:#4b6885;color:#fff;font-weight:600}
  .p-foot{flex:1;display:flex;align-items:flex-end;padding:0 15px 5px 5px;background:#535353}
  .grow{flex:1}
  .pf2{margin-left:11px}.pf3{margin-left:12px}
  .p-bottom{height:6px;flex:none;background:#444;display:flex;justify-content:center;border-radius:0 0 3px 3px;border-top:1px solid #363636}
  .p-bottom i{width:13px;height:2px;background:#3a3a3a;margin-top:1px}
  .vscroll{width:12px;flex:none;background:#4a4a4a;display:flex;flex-direction:column;align-items:center}
  .thumb{width:9px;height:25px;background:#727272;border-radius:5px;margin-top:386px}
  .vscroll svg{margin-top:auto;margin-bottom:4px}
  .status{height:11px;flex:none;display:flex;align-items:center;background:#4c4c4c;font-size:7.200px;color:#bdbdbd;white-space:nowrap}
  .zoomv{margin-left:10px;margin-right:4px}
  .nav1{margin-left:9px}
  .pageno{margin-left:6px;width:49px;height:11px;background:#3e3e3e;padding-left:2px;box-sizing:border-box;line-height:11px;color:#ddd}
  .pagebtn{width:12px;height:11px;background:#3e3e3e;margin-left:1px;display:flex;align-items:center;justify-content:center}
  .nav2{margin-left:7px}
  .arc{margin-left:14px}
  .basic{margin-left:10px;margin-right:6px}
  .green{width:5px;height:5px;border-radius:50%;background:#3fbf4f;margin-left:18px}
  .noerr{margin-left:5px;margin-right:12px}
  .sqr{width:8px;height:8px;border:1px solid #5f5f5f;box-sizing:border-box;margin-left:3px}
  .track{flex:1;height:11px;background:#484848;margin-left:2px;display:flex;align-items:center}
  .track i{width:270px;height:7px;background:#5e5e5e;margin-left:42px;border-radius:4px}
  .dock-panels{width:115px;flex:none;background:#535353;border-left:1px solid #3c3c3c;box-sizing:border-box}
  .dp-top{height:10px;background:#424242;text-align:right;padding-right:5px;font-size:8px;line-height:8px;color:#999}
  .dp-group{position:relative;padding:8px 0 .4px;border-bottom:1px solid #404040;box-sizing:border-box}
  .dp-group.first{padding-top:5.500px}
  .dp-group>i{position:absolute;left:50%;top:2px;width:14px;height:2px;margin-left:-7px;background:#434343}
  .dp-row{height:19.300px;display:flex;align-items:center;padding-left:5px;gap:3px;font-size:8.300px;font-weight:600;color:#d6d6d6;white-space:nowrap}
  .dp-row span{margin-left:2px}
  .dock{height:41px;width:943px;margin-left:27px;margin-top:1px;flex:none;box-sizing:border-box;background:#6f6f72;border-radius:10px;display:flex;padding:2px 0 0 6px;gap:5.590px}
  .app-i{width:28px;flex:none;display:flex;flex-direction:column;align-items:center}
  .app-i svg{flex:none;display:block}
  .app-i i{width:2px;height:2px;border-radius:50%;margin-top:5px}
  .app-i i.on{background:#e8e8e8}
  .adobe{width:28px;height:28px;border-radius:6px;display:flex;align-items:center;justify-content:center;font:600 17px "Open Sans",sans-serif;flex:none}
  .dock-sep{width:1px;height:32px;background:#8f8f92;margin:2px 4.500px 0;flex:none;align-self:flex-start}
</style>
